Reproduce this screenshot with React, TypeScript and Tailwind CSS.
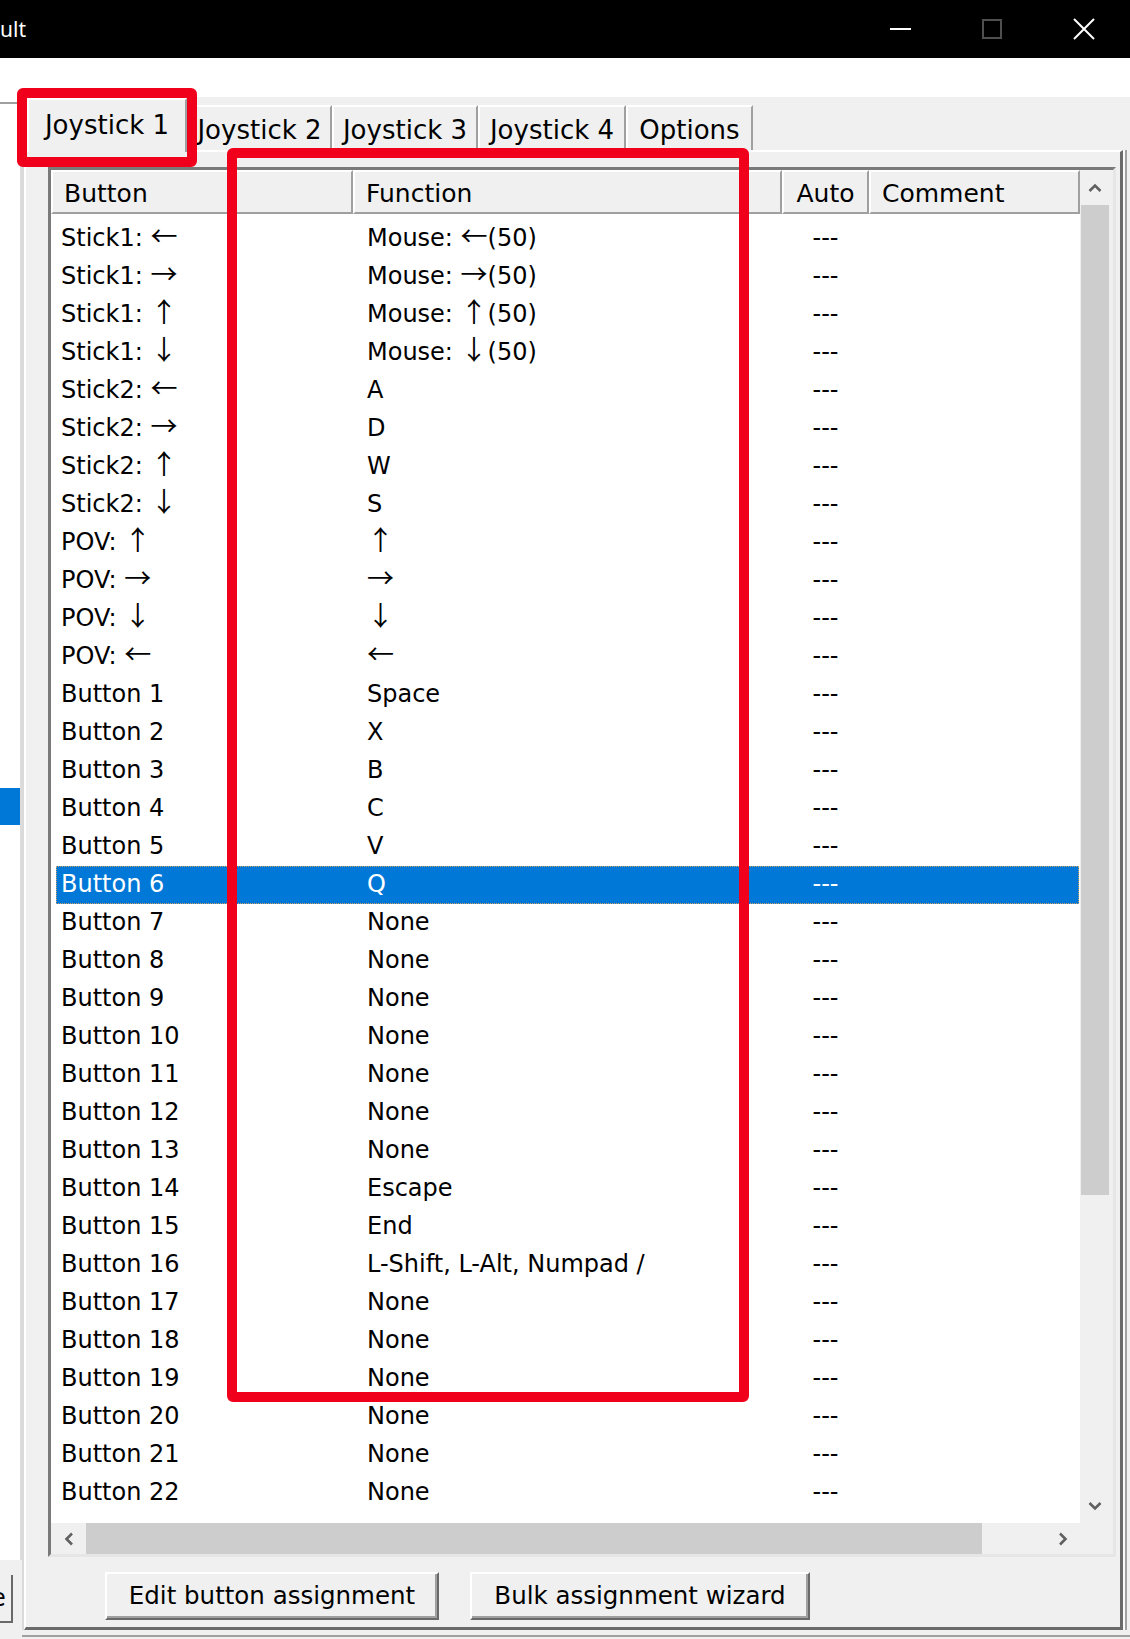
import React from 'react';

const rows: [string, string][] = [
  ['Stick1: ←', 'Mouse: ←(50)'],
  ['Stick1: →', 'Mouse: →(50)'],
  ['Stick1: ↑', 'Mouse: ↑(50)'],
  ['Stick1: ↓', 'Mouse: ↓(50)'],
  ['Stick2: ←', 'A'],
  ['Stick2: →', 'D'],
  ['Stick2: ↑', 'W'],
  ['Stick2: ↓', 'S'],
  ['POV: ↑', '↑'],
  ['POV: →', '→'],
  ['POV: ↓', '↓'],
  ['POV: ←', '←'],
  ['Button 1', 'Space'],
  ['Button 2', 'X'],
  ['Button 3', 'B'],
  ['Button 4', 'C'],
  ['Button 5', 'V'],
  ['Button 6', 'Q'],
  ['Button 7', 'None'],
  ['Button 8', 'None'],
  ['Button 9', 'None'],
  ['Button 10', 'None'],
  ['Button 11', 'None'],
  ['Button 12', 'None'],
  ['Button 13', 'None'],
  ['Button 14', 'Escape'],
  ['Button 15', 'End'],
  ['Button 16', 'L-Shift, L-Alt, Numpad /'],
  ['Button 17', 'None'],
  ['Button 18', 'None'],
  ['Button 19', 'None'],
  ['Button 20', 'None'],
  ['Button 21', 'None'],
  ['Button 22', 'None'],
];

const ARROWS = '←→↑↓';

function Cell({ text }: { text: string }) {
  const parts = text.split(/([←→↑↓])/).filter((p) => p !== '');
  return (
    <>
      {parts.map((p, i) =>
        ARROWS.includes(p) ? (
          <span key={i} className="font-['Noto_Sans_CJK_JP',sans-serif] text-[27px] leading-none">
            {p}
          </span>
        ) : (
          <span key={i}>{p}</span>
        )
      )}
    </>
  );
}

function Chevron({ dir }: { dir: 'up' | 'down' | 'left' | 'right' }) {
  const vertical = dir === 'up' || dir === 'down';
  const w = vertical ? 14 : 10;
  const h = vertical ? 10 : 14;
  const pts = {
    up: '1.5,8 7,2.5 12.5,8',
    down: '1.5,2 7,7.5 12.5,2',
    left: '8,1.5 2.5,7 8,12.5',
    right: '2,1.5 7.5,7 2,12.5',
  }[dir];
  return (
    <svg width={w} height={h} viewBox={`0 0 ${w} ${h}`}>
      <polyline points={pts} fill="none" stroke="#606060" strokeWidth="2.6" />
    </svg>
  );
}

function Tab({ label, width, selected }: { label: string; width: number; selected?: boolean }) {
  if (selected) {
    return (
      <div
        style={{ width }}
        className="relative z-20 -mb-[2px] h-[54px] bg-[#f0f0f0] border-t-2 border-l-2 border-white border-r-2 border-r-[#a0a0a0] flex items-center justify-center pb-[2px] text-[26px]"
      >
        {label}
      </div>
    );
  }
  return (
    <div
      style={{ width }}
      className="h-[45px] bg-[#f0f0f0] border-t-2 border-l-2 border-white border-r-2 border-r-[#a0a0a0] flex items-center justify-center pt-[3px] text-[26px]"
    >
      {label}
    </div>
  );
}

function WinButton({ label, width }: { label: string; width: string }) {
  return (
    <div
      className={`${width} h-[48px] bg-[#f0f0f0] border-2 border-t-white border-l-white border-r-[#696969] border-b-[#696969] shadow-[inset_-2px_-2px_0_#a0a0a0] flex items-center justify-center leading-none text-[24.5px]`}
    >
      {label}
    </div>
  );
}

export default function App() {
  return (
    <div className="relative w-[1130px] h-[1639px] overflow-hidden bg-[#f0f0f0] font-['DejaVu_Sans',sans-serif] text-[24px] text-black">
      {/* Title bar */}
      <div className="h-[58px] bg-black flex items-center">
        <span className="text-white font-['Noto_Sans',sans-serif] text-[21px] leading-none">ult</span>
        <div className="ml-auto flex h-full">
          <div className="w-[92px] flex items-center justify-center">
            <div className="w-[21px] h-[2px] bg-white" />
          </div>
          <div className="w-[92px] flex items-center justify-center">
            <div className="w-[20px] h-[20px] border-2 border-[#4f4f4f]" />
          </div>
          <div className="w-[92px] flex items-center justify-center">
            <svg width="22" height="22" viewBox="0 0 22 22">
              <path d="M1 1L21 21M21 1L1 21" stroke="white" strokeWidth="2" />
            </svg>
          </div>
        </div>
      </div>

      <div className="flex h-[1581px]">
        {/* Left column (clipped list panel) */}
        <div className="w-[22px] flex flex-col">
          <div className="h-[44px] bg-white" />
          <div className="h-[1458px] bg-white border-t-2 border-t-[#a0a0a0] border-r-2 border-r-[#dcdcdc]">
            <div className="h-[684px]" />
            <div className="h-[37px] w-[20px] bg-[#0078d7]" />
          </div>
          <div className="pt-[15px]">
            <div className="w-[13px] h-[48px] overflow-hidden bg-[#f0f0f0] border-r-2 border-b-2 border-[#696969] flex items-center leading-none">
              <span className="-ml-[9px]">e</span>
            </div>
          </div>
        </div>

        {/* Right column */}
        <div className="flex-1 flex flex-col">
          <div className="h-[39px] bg-white" />
          {/* Tab strip */}
          <div className="relative z-10 h-[53px] flex items-end pl-[5px]">
            <Tab label="Joystick 1" width={160} selected />
            <Tab label="Joystick 2" width={145} />
            <Tab label="Joystick 3" width={146} />
            <Tab label="Joystick 4" width={148} />
            <Tab label="Options" width={127} />
          </div>

          {/* Tab panel */}
          <div className="flex h-[1480px]">
            <div className="w-[2px] bg-[#dadada]" />
            <div className="flex-1 flex flex-col bg-[#f0f0f0] border-t-2 border-l-2 border-white border-r-[3px] border-b-[3px] border-r-[#6a6a6a] border-b-[#6a6a6a]">
              {/* List view */}
              <div className="ml-[22px] mt-[15px] w-[1068px] h-[1390px] bg-white border-[3px] border-t-[#7a7a7a] border-l-[#7a7a7a] border-r-[#e6e6e6] border-b-[#e6e6e6] flex flex-col">
                <div className="flex h-[1353px]">
                  <div className="w-[1029px] flex flex-col">
                    {/* header */}
                    <div className="h-[44px] grid grid-cols-[302px_429px_87px_211px] text-[25px]">
                      {['Button', 'Function', 'Auto', 'Comment'].map((h) => (
                        <div
                          key={h}
                          className={`bg-[#f0f0f0] border-t-2 border-l-2 border-white border-r-2 border-b-2 border-r-[#a0a0a0] border-b-[#a0a0a0] flex items-center leading-none pt-[2px] ${h === 'Auto' ? 'justify-center' : 'pl-[11px]'}`}
                        >
                          {h}
                        </div>
                      ))}
                    </div>
                    {/* rows */}
                    <div className="flex-1 overflow-hidden pt-[6px]">
                      {rows.map(([b, f], i) => {
                        const sel = i === 17;
                        return (
                          <div
                            key={i}
                            className={`relative h-[38px] grid grid-cols-[302px_429px_87px_211px] leading-[36px] ${sel ? 'text-white' : ''}`}
                          >
                            {sel && (
                              <div className="absolute left-[5px] right-[1px] top-0 bottom-0 bg-[#0078d7] border border-dotted border-[#c9a26b]" />
                            )}
                            <div className="relative h-[38px] pl-[10px] whitespace-nowrap">
                              <Cell text={b} />
                            </div>
                            <div className="relative h-[38px] pl-[14px] whitespace-nowrap">
                              <Cell text={f} />
                            </div>
                            <div className="relative text-center">---</div>
                            <div />
                          </div>
                        );
                      })}
                    </div>
                  </div>
                  {/* vertical scrollbar */}
                  <div className="w-[33px] flex flex-col bg-[#f0f0f0]">
                    <div className="h-[35px] flex items-center justify-center pr-[3px]">
                      <Chevron dir="up" />
                    </div>
                    <div className="pl-[1px] pr-[4px]">
                      <div className="h-[990px] bg-[#cdcdcd]" />
                    </div>
                    <div className="flex-1" />
                    <div className="h-[35px] flex items-center justify-center pr-[3px]">
                      <Chevron dir="down" />
                    </div>
                  </div>
                </div>
                {/* horizontal scrollbar */}
                <div className="flex h-[31px] bg-[#f0f0f0]">
                  <div className="w-[1029px] flex">
                    <div className="w-[35px] flex items-center justify-center">
                      <Chevron dir="left" />
                    </div>
                    <div className="w-[896px] bg-[#cdcdcd]" />
                    <div className="flex-1" />
                    <div className="w-[35px] flex items-center justify-center">
                      <Chevron dir="right" />
                    </div>
                  </div>
                  <div className="flex-1" />
                </div>
              </div>

              {/* Buttons */}
              <div className="mt-[15px] flex">
                <div className="ml-[79px]">
                  <WinButton label="Edit button assignment" width="w-[334px]" />
                </div>
                <div className="ml-[31px]">
                  <WinButton label="Bulk assignment wizard" width="w-[340px]" />
                </div>
              </div>
            </div>
            <div className="w-[2px] bg-[#fafafa]" />
            <div className="w-[2px] bg-[#a0a0a0]" />
            <div className="w-[3px]" />
          </div>
          <div className="h-[5px]" />
          <div className="h-[2px] bg-[#a0a0a0]" />
        </div>
      </div>

      {/* Red annotation rectangles */}
      <div className="absolute left-[17px] top-[88px] w-[180px] h-[79px] border-[10px] border-[#f0001a] rounded-[6px] z-30" />
      <div className="absolute left-[227px] top-[148px] w-[522px] h-[1254px] border-[10px] border-[#f0001a] rounded-[6px] z-30" />
    </div>
  );
}
